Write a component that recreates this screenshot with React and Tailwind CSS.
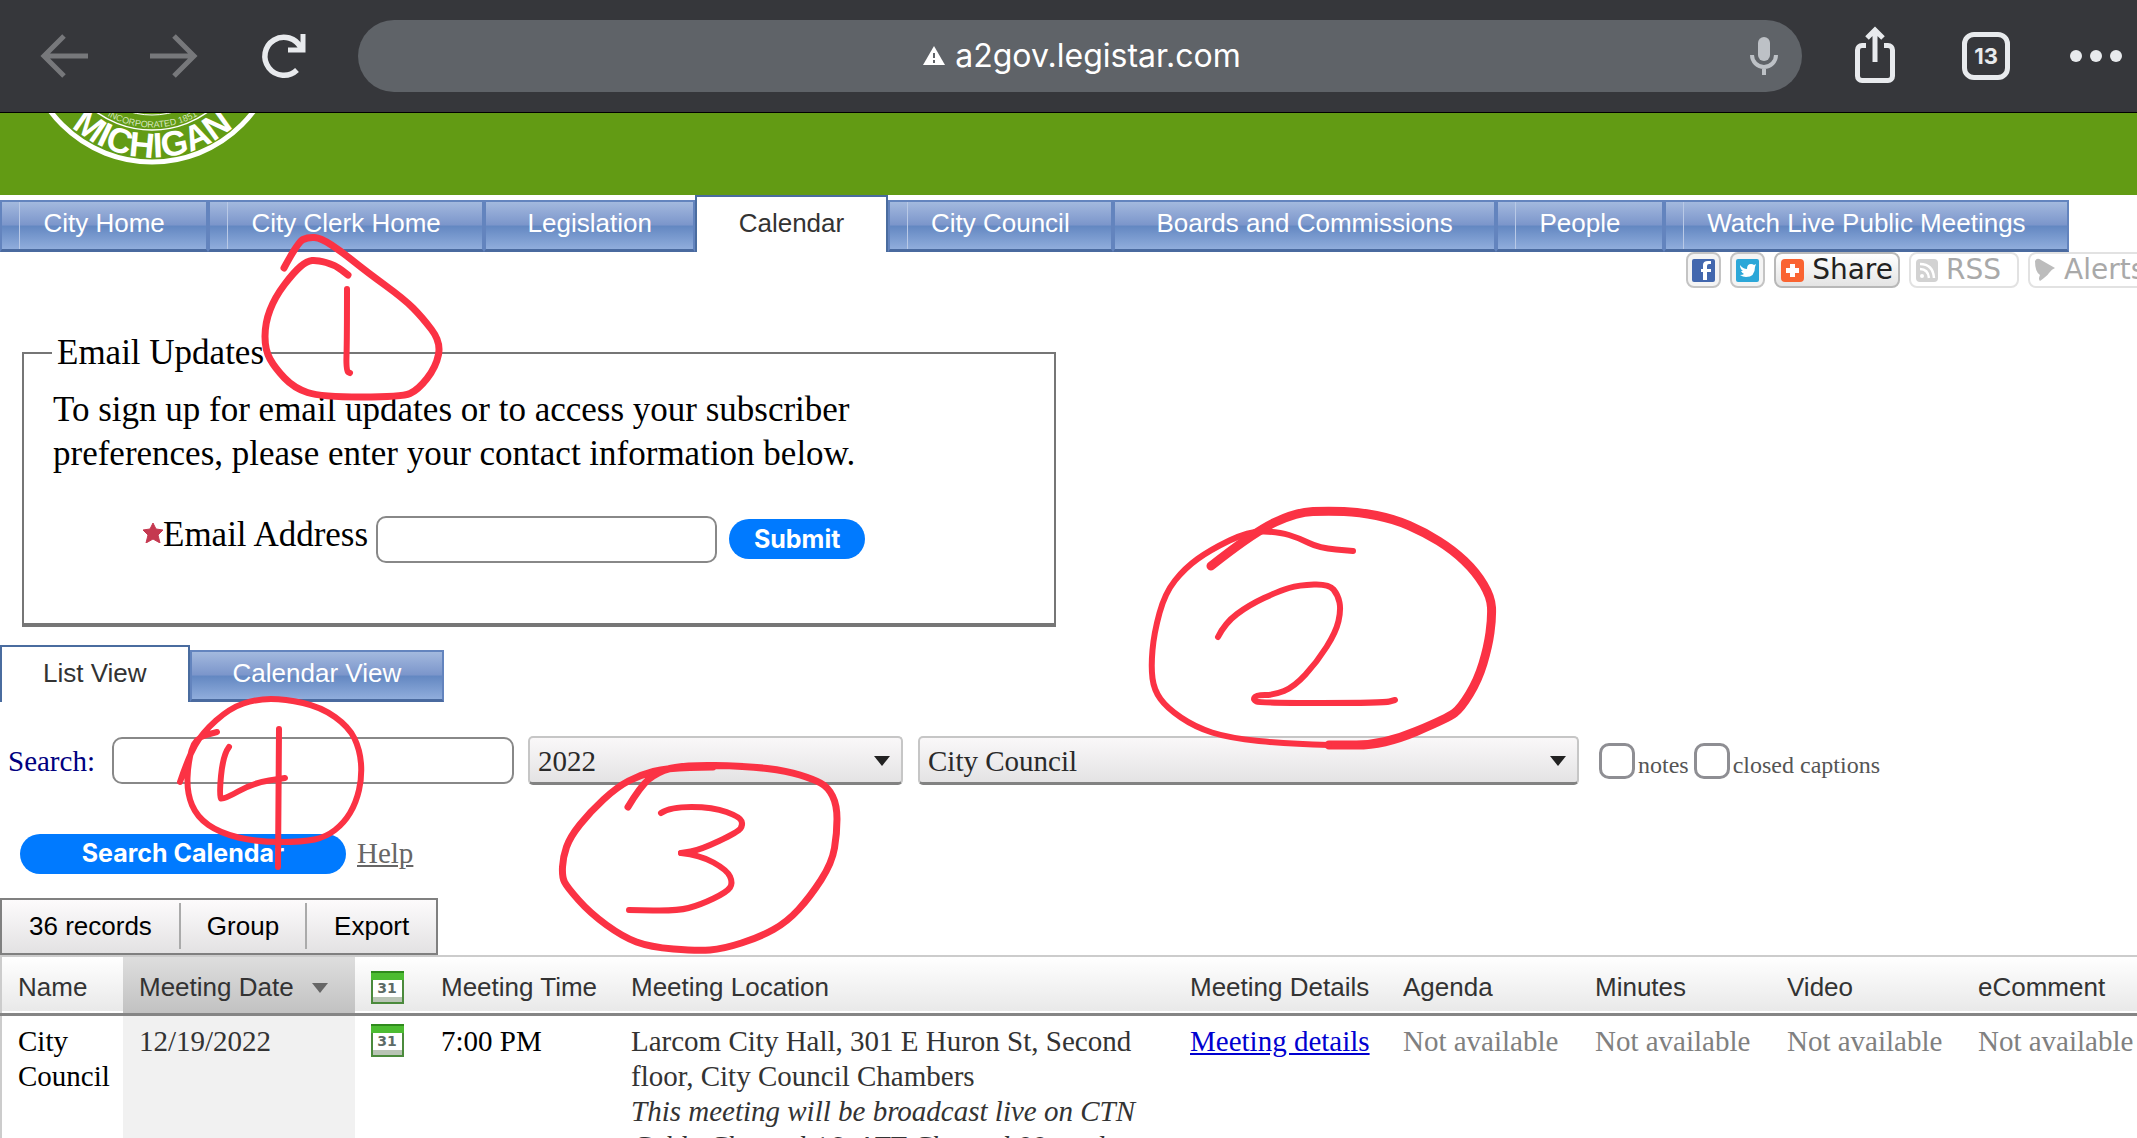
import { useState } from "react";

const navTabs = [
  { label: "City Home", seam: true },
  { label: "City Clerk Home", seam: true },
  { label: "Legislation" },
  { label: "Calendar", active: true },
  { label: "City Council", seam: true },
  { label: "Boards and Commissions" },
  { label: "People", seam: true },
  { label: "Watch Live Public Meetings", seam: true },
];

// Pen strokes, each one a list of x,y points
const strokes = [
  { width: 7, points: "284,268 298,242 308,237 321,238 342,252 367,272 404,299 422,317 441,342 436,367 418,390 402,397 321,397 294,388 275,368 265,350 265,323 275,297 294,272 307,261 317,260 335,265 348,275" },
  { width: 6, points: "347,289 347,340 346,371 350,373" },
  { width: 9, points: "1211,566 1254,532 1297,512 1329,511 1359,512 1394,519 1424,532 1453,550 1476,572 1491,597 1492,618 1488,647 1478,680 1461,708 1448,718 1384,745 1329,745" },
  { width: 6, points: "1329,745 1289,744 1229,738 1195,727 1167,708 1154,690 1151,667 1154,633 1165,593 1185,568 1210,550 1249,531 1279,532 1299,538 1319,548 1353,551" },
  { width: 6, points: "1218,637 1225,623 1249,605 1279,591 1299,585 1329,584 1338,595 1341,610 1336,632 1317,662 1294,687 1274,695 1256,695 1253,700 1260,703 1384,703 1395,700" },
  { width: 7, points: "628,807 640,787 657,772 683,765 747,766 787,771 813,779 828,787 837,805 837,833 832,863 810,897 787,922 760,937 723,949 697,951 650,947 623,937 590,913 567,887 562,877 563,857 570,837 590,812 617,787 640,775 667,768 713,767" },
  { width: 6, points: "661,813 670,807 713,807 740,817 743,825 738,832 700,850 681,853" },
  { width: 6, points: "681,853 700,855 727,870 733,883 727,892 700,905 677,911 629,910" },
  { width: 6, points: "180,782 188,758 202,733 230,708 257,699 285,699 321,707 349,727 360,750 362,777 356,803 344,823 326,837 303,842 257,842 220,833 197,817 187,793 188,763 195,738 217,732" },
  { width: 6, points: "229,747 223,755 219,797 223,800 253,783 285,778" },
  { width: 6, points: "279,729 278,867" },
];

// Rounds the corners of a point list with quadratic curves
const toPath = (points) => {
  const p = points.split(" ").map((s) => s.split(",").map(Number));
  let d = `M${p[0]}`;
  for (let i = 1; i < p.length - 1; i++) {
    const mid = [(p[i][0] + p[i + 1][0]) / 2, (p[i][1] + p[i + 1][1]) / 2];
    d += ` Q${p[i]} ${mid}`;
  }
  return `${d} L${p[p.length - 1]}`;
};

const BrowserBar = () => (
  <header className="flex h-[113px] items-center border-b border-black bg-[#36373b] pl-10 pr-[15px]">
    <div className="flex gap-[62px]">
      <button aria-label="Back" className="text-[#77787b]">
        <svg width="48" height="48" viewBox="0 0 48 48" fill="none" stroke="currentColor" strokeWidth="5">
          <path d="M48 24H4M24 4 4 24l20 20" />
        </svg>
      </button>
      <button aria-label="Forward" className="text-[#77787b]">
        <svg width="48" height="48" viewBox="0 0 48 48" fill="none" stroke="currentColor" strokeWidth="5">
          <path d="M0 24h44M24 4l20 20-20 20" />
        </svg>
      </button>
      <button aria-label="Reload" className="text-[#e8eaed]">
        <svg width="48" height="48" viewBox="0 0 48 48" fill="none" stroke="currentColor" strokeWidth="5.5">
          <path d="M41 16A19 19 0 1 0 37 38" />
          <path d="M43 2V18H28" strokeWidth="5" />
        </svg>
      </button>
    </div>
    <div className="ml-[50px] flex h-[72px] flex-1 items-center rounded-full bg-[#5f6368] pr-6">
      <div className="flex flex-1 items-center justify-center gap-[10px] pl-14 text-[32px] leading-10 text-white">
        <svg width="22" height="20" viewBox="0 0 22 20">
          <path d="M11 0 22 19H0z" fill="#fff" />
          <path d="M11 7v5M11 14v3" stroke="#5f6368" strokeWidth="2" />
        </svg>
        <span>a2gov.legistar.com</span>
      </div>
      <button aria-label="Voice search" className="text-[#bdc1c6]">
        <svg width="28" height="40" viewBox="0 0 28 40">
          <rect x="8" y="1" width="12" height="24" rx="6" fill="currentColor" />
          <path d="M2 19a12 12 0 0 0 24 0M14 31v8" fill="none" stroke="currentColor" strokeWidth="4" />
        </svg>
      </button>
    </div>
    <button aria-label="Share" className="ml-[49px] text-[#e8eaed]">
      <svg width="48" height="60" viewBox="0 0 48 60" fill="none" stroke="currentColor" strokeWidth="5">
        <path d="M15 19.500h-4a4.500 4.500 0 0 0-4.500 4.500v26a4.500 4.500 0 0 0 4.500 4.500h26a4.500 4.500 0 0 0 4.500-4.500V24a4.500 4.500 0 0 0-4.500-4.500h-4" />
        <path d="M24 36V4M16 12l8-8 8 8" />
      </svg>
    </button>
    <button className="ml-[63px] h-12 w-12 rounded-xl border-5 border-[#e8eaed] text-[22px] font-bold leading-9 text-[#e8eaed]">
      13
    </button>
    <button aria-label="More" className="ml-[60px] text-[#e8eaed]">
      <svg width="52" height="12" viewBox="0 0 52 12" fill="currentColor">
        <circle cx="6" cy="6" r="6" />
        <circle cx="26" cy="6" r="6" />
        <circle cx="46" cy="6" r="6" />
      </svg>
    </button>
  </header>
);

const Banner = () => (
  <div className="h-[82px] bg-[#629b14]">
    <svg width="306" height="60" viewBox="0 78 306 60" fill="none" stroke="#fff">
      <path id="outer-arc" d="M30 0A122 122 0 0 0 275 0" stroke="none" />
      <path id="inner-arc" d="M60 0A92 92 0 0 0 245 0" stroke="none" />
      <circle cx="152" cy="0" r="127" strokeWidth="5" />
      <circle cx="152" cy="0" r="95" strokeWidth="1.500" />
      <circle cx="152" cy="0" r="80" strokeWidth="1" />
      <text fill="#fff" stroke="none" textAnchor="middle" fontSize="35" fontWeight="bold">
        <textPath href="#outer-arc" startOffset="50%">MICHIGAN</textPath>
      </text>
      <text fill="#d6e6bf" stroke="none" textAnchor="middle" fontSize="9">
        <textPath href="#inner-arc" startOffset="50%">INCORPORATED 1851</textPath>
      </text>
    </svg>
  </div>
);

const Tab = ({ label, active, seam, grow }) => (
  <a
    href="#"
    className={
      "relative border-2 px-[41px] text-center whitespace-nowrap text-[26px] leading-8 " +
      (grow ? "grow " : "") +
      (active
        ? "h-[57px] border-[#4a6c9f] border-b-0 bg-white pt-[10px] text-[#333]"
        : "h-[52px] border-[#6384be] border-b-[#4a6a9f] border-b-3 bg-[linear-gradient(#a3b9de_0%,#7c96cb_48%,#6488c2_52%,#90addc_100%)] pt-[5px] text-white")
    }
  >
    {seam && <span className="absolute inset-y-0 left-[17px] w-px bg-[#b9c9e6]" />}
    {label}
  </a>
);

const ShareLinks = () => (
  <div className="flex justify-end overflow-hidden">
    <div className="flex h-9 w-[451px] gap-[9px] font-['DejaVu_Sans',sans-serif] text-[28px] leading-8">
      <a href="#" aria-label="Facebook" className="flex w-[35px] shrink-0 items-center justify-center rounded-lg border-2 border-[#c4c4c4] bg-[#f4f4f4]">
        <svg width="23" height="23" viewBox="0 0 23 23">
          <rect width="23" height="23" rx="2" fill="#4267ae" />
          <path d="M19 5h-2q-2 0-2 2v3h4v3h-4v8h-4v-8H9v-3h2V6q0-4 5-4h3z" fill="#fff" />
        </svg>
      </a>
      <a href="#" aria-label="Twitter" className="flex w-[35px] shrink-0 items-center justify-center rounded-lg border-2 border-[#c4c4c4] bg-[#f4f4f4]">
        <svg width="23" height="23" viewBox="0 0 23 23">
          <rect width="23" height="23" rx="2" fill="#2ca7d8" />
          <path d="M4 6q3 4 7 4 0-5 4-5 2 0 3 1l2-1-1 3q0 10-9 10-3 0-6-2 3 0 4-1-2-1-3-3h2q-3-2-3-6z" fill="#fff" />
        </svg>
      </a>
      <a href="#" className="flex w-[126px] shrink-0 items-center justify-between rounded-lg border-2 border-[#b8b8b8] bg-gradient-to-b from-white to-[#e4e4e4] px-[5px] text-[#222]">
        <svg width="23" height="23" viewBox="0 0 23 23">
          <rect width="23" height="23" rx="4" fill="#fa6432" />
          <path d="M11.500 5v13M5 11.500h13" stroke="#fff" strokeWidth="5" />
        </svg>
        <span>Share</span>
      </a>
      <a href="#" className="flex w-[110px] shrink-0 items-center gap-2 rounded-lg border-2 border-[#e2e2e2] px-[5px] text-[#a9a9a9]">
        <svg width="22" height="23" viewBox="0 0 22 23" fill="none">
          <rect width="22" height="23" rx="4" fill="#d2d2d2" />
          <circle cx="6" cy="17" r="2" fill="#fff" />
          <path d="M4 10q8 0 9 9M4 5q13 0 14 14" stroke="#fff" strokeWidth="2.500" />
        </svg>
        <span>RSS</span>
      </a>
      <a href="#" className="flex w-[130px] shrink-0 items-center gap-2 rounded-lg border-2 border-[#e2e2e2] px-1 text-[#a9a9a9]">
        <svg width="22" height="24" viewBox="0 0 22 24" fill="#bcbcbc">
          <path d="M1 3q2-4 6-1l14 8q-3 1-6 5-2 3-9 8-2-2 0-6Q1 14 1 3z" />
        </svg>
        <span>Alerts</span>
      </a>
    </div>
  </div>
);

const EmailUpdates = () => {
  const [email, setEmail] = useState("");

  return (
    <fieldset className="mt-[43px] ml-[22px] w-[1034px] border-2 border-b-4 border-[#767676] px-[29px] text-[35px] leading-[44px] text-black">
      <legend className="-ml-px px-[5px]">Email Updates</legend>
      <p className="mt-[13px] max-w-[830px]">
        To sign up for email updates or to access your subscriber preferences, please enter your
        contact information below.
      </p>
      <div className="mt-[37px] mb-[58px] ml-[90px] flex items-center">
        <svg width="20" height="20" viewBox="0 0 20 20" className="mb-3" fill="#c53950" stroke="#c53950" strokeWidth="1">
          <path d="m10 0 3 6 7 1-5 5 2 8-7-4-7 4 2-8-5-5 7-1z" />
        </svg>
        <label htmlFor="email" className="pb-2">Email Address</label>
        <input
          id="email"
          type="email"
          value={email}
          onChange={(e) => setEmail(e.target.value)}
          className="ml-2 h-[47px] w-[341px] rounded-[10px] border-2 border-[#888] px-3"
        />
        <button className="ml-3 h-10 w-[136px] rounded-full bg-[#007aff] font-['Inter',sans-serif] text-[25px] leading-10 font-bold text-white">
          Submit
        </button>
      </div>
    </fieldset>
  );
};

const SelectBox = ({ label, value, className }) => (
  <div className={"relative " + className}>
    <select
      aria-label={label}
      className="h-[49px] w-full appearance-none rounded-[5px] border-2 border-[#c6c6c6] border-b-3 border-b-[#828282] bg-gradient-to-b from-[#faf8f9] to-[#e4e3e4] px-2 pt-0.5 text-[#2a2a2a]"
    >
      <option>{value}</option>
    </select>
    <svg width="16" height="10" viewBox="0 0 16 10" className="pointer-events-none absolute top-5 right-[13px]">
      <path d="M0 0h16L8 10z" fill="#222" />
    </svg>
  </div>
);

const CheckBox = ({ label }) => (
  <label className="flex items-center gap-[3px] text-[24px] text-[#555]">
    <input type="checkbox" className="h-9 w-9 appearance-none rounded-[10px] border-3 border-[#8e8e93] bg-white" />
    <span className="pt-2">{label}</span>
  </label>
);

const SearchForm = () => {
  const [query, setQuery] = useState("");

  return (
    <form className="mt-[34px] text-[29px]" onSubmit={(e) => e.preventDefault()}>
      <div className="flex items-center">
        <label htmlFor="search" className="w-[112px] pt-0.5 pl-2 text-[#00007f]">Search:</label>
        <input
          id="search"
          value={query}
          onChange={(e) => setQuery(e.target.value)}
          className="h-[47px] w-[402px] rounded-[10px] border-2 border-[#888] px-3"
        />
        <SelectBox label="Year" value="2022" className="ml-[14px] w-[375px]" />
        <SelectBox label="Body" value="City Council" className="ml-[15px] w-[661px]" />
        <div className="ml-5 flex gap-[5px]">
          <CheckBox label="notes" />
          <CheckBox label="closed captions" />
        </div>
      </div>
      <div className="mt-[49px] flex h-10 items-center">
        <button className="ml-5 h-10 w-[326px] rounded-full bg-[#007aff] font-['Inter',sans-serif] text-[25px] font-bold text-white">
          Search Calendar
        </button>
        <a href="#" className="ml-[11px] text-[#666] underline">Help</a>
      </div>
    </form>
  );
};

const CalendarIcon = () => (
  <svg width="33" height="33" viewBox="0 0 33 33">
    <rect x="1" y="1" width="31" height="31" fill="#fff" stroke="#4b8a3c" strokeWidth="2" />
    <path d="M0 0h33v9H0z" fill="#4cbc31" />
    <path d="M0 0h33v2H0z" fill="#2f8a1d" />
    <path d="M2 26h29v5H2z" fill="#b9c4b5" />
    <text x="16" y="22" textAnchor="middle" fontSize="14" fontWeight="bold" fontFamily="DejaVu Sans" fill="#5d6b66">
      31
    </text>
  </svg>
);

const MeetingTable = () => (
  <table className="w-full table-fixed border-collapse border-t-2 border-l-2 border-[#ccc] text-left text-[29px] leading-[35px]">
    <colgroup>
      <col className="w-[122px]" />
      <col className="w-[232px]" />
      <col className="w-[70px]" />
      <col className="w-[190px]" />
      <col className="w-[559px]" />
      <col className="w-[213px]" />
      <col className="w-[192px]" />
      <col className="w-[192px]" />
      <col className="w-[191px]" />
      <col />
    </colgroup>
    <thead className="border-b-3 border-[#858585] bg-gradient-to-b from-white to-[#e9e9e9] font-['Liberation_Sans',sans-serif] text-[26px] text-[#333]">
      <tr className="h-[58px] whitespace-nowrap [&>th]:px-4 [&>th]:pt-1.5 [&>th]:font-normal">
        <th>Name</th>
        <th className="bg-gradient-to-b from-[#dedede] to-[#c2c2c2]">
          <span className="flex items-center gap-[18px]">
            Meeting Date
            <svg width="16" height="10" viewBox="0 0 16 10"><path d="M0 0h16L8 10z" fill="#666" /></svg>
          </span>
        </th>
        <th><CalendarIcon /></th>
        <th>Meeting Time</th>
        <th>Meeting Location</th>
        <th>Meeting Details</th>
        <th>Agenda</th>
        <th>Minutes</th>
        <th>Video</th>
        <th>eComment</th>
      </tr>
    </thead>
    <tbody>
      <tr className="align-top text-[#333] [&>td]:px-4 [&>td]:pt-2 [&>td]:pb-3">
        <td className="text-black">City Council</td>
        <td className="bg-[#f1f1f1]">12/19/2022</td>
        <td><CalendarIcon /></td>
        <td className="text-black">7:00 PM</td>
        <td>
          Larcom City Hall, 301 E Huron St, Second floor, City Council Chambers
          <br />
          <i>This meeting will be broadcast live on CTN Cable Channel 16, ATT Channel 99, and</i>
        </td>
        <td><a href="#" className="whitespace-nowrap text-[#0000d0] underline">Meeting details</a></td>
        {["agenda", "minutes", "video", "ecomment"].map((key) => (
          <td key={key} className="whitespace-nowrap text-[#808080]">Not available</td>
        ))}
      </tr>
    </tbody>
  </table>
);

const Annotations = () => (
  <svg
    width="2137"
    height="1138"
    className="pointer-events-none absolute top-0 left-0"
    fill="none"
    stroke="#fb3244"
    strokeLinecap="round"
    strokeLinejoin="round"
  >
    {strokes.map((s) => (
      <path key={s.points} d={toPath(s.points)} strokeWidth={s.width} />
    ))}
  </svg>
);

const App = () => {
  return (
    <div className="relative h-screen overflow-hidden bg-white font-['Liberation_Serif',serif]">
      <div className="font-['Inter',sans-serif]">
        <BrowserBar />
      </div>
      <div className="font-['Liberation_Sans',sans-serif]">
        <Banner />
        <nav className="mr-[68px] flex items-end">
          {navTabs.map((tab) => (
            <Tab key={tab.label} {...tab} grow />
          ))}
        </nav>
      </div>
      <ShareLinks />
      <EmailUpdates />
      <div className="mt-[18px] flex items-end font-['Liberation_Sans',sans-serif]">
        <Tab label="List View" active />
        <Tab label="Calendar View" />
      </div>
      <SearchForm />
      <div className="mt-6 flex w-fit items-center border-2 border-[#808080] bg-gradient-to-b from-[#fdfbfc] to-[#e3e2e3] pt-[3px] pb-1 font-['Liberation_Sans',sans-serif] text-[26px] leading-[46px] text-black">
        <button className="border-r-2 border-[#aaa] px-[27px]">36 records</button>
        <button className="border-r-2 border-[#aaa] px-[26px]">Group</button>
        <button className="px-[27px]">Export</button>
      </div>
      <MeetingTable />
      <Annotations />
    </div>
  );
};

export default App;
